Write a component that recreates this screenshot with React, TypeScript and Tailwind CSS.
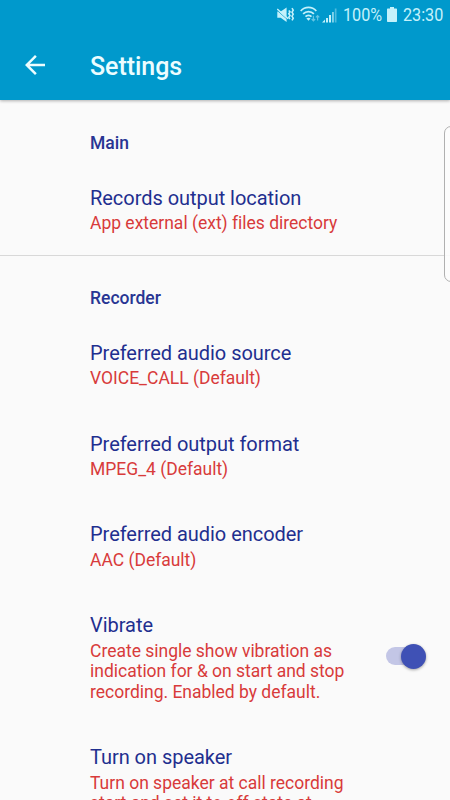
import React, { ReactNode } from "react";
import { clsx } from "clsx";

function MutedIcon() {
  return (
    <svg width="18" height="16" viewBox="0 0 18 16" fill="currentColor">
      <path d="M0.3 4.6h3.4L9.6 0.4v14.6L3.7 10.8H0.3z" />
      <path d="M0 3.3l11 9.7" stroke="#0099cc" strokeWidth="0.8" />
      <path d="M0.2 2l11 9.8" stroke="currentColor" strokeWidth="1.5" />
      <path
        d="M11.8 3.4l1.2 1.5-1.2 1.8 1.2 1.8-1.2 1.8 1.2 1.6M15 1.2l1.2 2-1.2 2 1.2 2-1.2 2 1.2 2-1.2 2.2"
        fill="none"
        stroke="currentColor"
        strokeWidth="1.6"
      />
    </svg>
  );
}

function WifiIcon() {
  return (
    <svg width="21" height="16" viewBox="0 0 21 16" fill="none" stroke="currentColor">
      <path d="M0.7 5c4.2-4.8 11.4-4.8 15.6 0" strokeWidth="1.7" />
      <path d="M3.1 7.9c2.9-3.1 7.9-3.1 10.8 0" strokeWidth="1.7" />
      <path d="M5.5 10.7c1.6-1.7 4.4-1.7 6 0" strokeWidth="1.7" />
      <path d="M8.5 14.8l-2.1-2.2c1.1-1.1 3.1-1.1 4.2 0z" fill="currentColor" stroke="none" />
      <path
        d="M13.4 9.8v4.8M11.7 13l1.7 1.8 1.7-1.8M17.6 14.4V9.8M15.9 11.4l1.7-1.8 1.7 1.8"
        strokeWidth="1.2"
        opacity=".5"
      />
    </svg>
  );
}

function SignalIcon() {
  return (
    <svg width="15" height="15" viewBox="0 0 15 15" fill="currentColor">
      <path d="M0 14.5l3-3v3z" />
      <path d="M4 10h2v4.5H4z" />
      <path d="M7 7h2v7.5H7z" />
      <path d="M10 4h1.9v10.5H10z" opacity=".65" />
      <path d="M12.8 0.5h1.7v14h-1.7z" opacity=".4" />
    </svg>
  );
}

function BatteryIcon() {
  return (
    <svg width="10" height="15" viewBox="0 0 10 15" fill="currentColor">
      <path d="M3 0h4v1.6h2.3q.7 0 .7.7v12q0 .7-.7.7H.7q-.7 0-.7-.7v-12q0-.7.7-.7H3z" />
    </svg>
  );
}

function StatusBar() {
  return (
    <div className="flex h-[30px] items-center pl-[277px] text-[#c4f1fb]">
      <MutedIcon />
      <span className="ml-[5px] flex pb-[2px]">
        <WifiIcon />
      </span>
      <span className="ml-[1px] flex">
        <SignalIcon />
      </span>
      <span className="ml-[6px] w-[44px] origin-left scale-x-[.87] text-[18.6px] leading-[30px]">
        100%
      </span>
      <span className="flex pb-[1px]">
        <BatteryIcon />
      </span>
      <span className="ml-[6px] origin-left scale-x-[.87] text-[18.6px] leading-[30px]">
        23:30
      </span>
    </div>
  );
}

function AppBar() {
  return (
    <header className="h-[100px] bg-[#0099cc] shadow-[0_1px_3px_rgba(0,0,0,0.3)]">
      <StatusBar />
      <div className="flex h-[70px] items-center pl-[20px] text-[#ecfdff]">
        <svg width="30" height="30" viewBox="0 0 24 24" fill="currentColor">
          <path d="M20 11H7.83l5.59-5.59L12 4l-8 8 8 8 1.41-1.41L7.83 13H20v-2z" />
        </svg>
        <h1 className="ml-[40px] pt-[3px] text-[25px] leading-[30px] font-medium tracking-[-0.05px]">
          Settings
        </h1>
      </div>
    </header>
  );
}

function Category({ children, className }: { children: ReactNode; className?: string }) {
  return (
    <h2
      className={clsx(
        "pl-[90px] text-[17.5px] leading-[24px] font-medium text-[#283593]",
        className,
      )}
    >
      {children}
    </h2>
  );
}

/** Small on-state switch, thumb sits over the right end of the track. */
function Switch() {
  return (
    <span className="mb-[4px] flex h-[18px] w-[36px] items-center rounded-full bg-[#c3c6e6]">
      <span className="ml-[15px] h-[25px] w-[25px] shrink-0 rounded-full bg-[#3f51b5] shadow-[0_1px_3px_rgba(0,0,0,0.35)]" />
    </span>
  );
}

type PreferenceProps = {
  title: string;
  summary: ReactNode;
  widget?: ReactNode;
};

function Preference({ title, summary, widget }: PreferenceProps) {
  return (
    <div className="flex items-center pt-[20px] pb-[19.4px] pl-[90px]">
      <div className="w-[296px] shrink-0 whitespace-nowrap">
        <div className="h-[27px] text-[20px] leading-[27px] tracking-[-0.04px] text-[#1f2f8f]">
          {title}
        </div>
        <div className="pt-[1.4px] pb-[2.4px] text-[17.5px] leading-[20.6px] tracking-[-0.01px] text-[#d83b3b]">
          {summary}
        </div>
      </div>
      {widget}
    </div>
  );
}

export default function App() {
  return (
    <div className="relative h-[800px] w-[450px] overflow-hidden bg-[#fafafa] font-['Roboto',sans-serif]">
      <AppBar />
      <Category className="pt-[31px] pb-[10px]">Main</Category>
      <Preference
        title="Records output location"
        summary="App external (ext) files directory"
      />
      <div className="-mt-px h-px bg-[#d8d8d8]" />
      <Category className="pt-[30.1px] pb-[10px]">Recorder</Category>
      <Preference title="Preferred audio source" summary="VOICE_CALL (Default)" />
      <Preference title="Preferred output format" summary="MPEG_4 (Default)" />
      <Preference title="Preferred audio encoder" summary="AAC (Default)" />
      <Preference
        title="Vibrate"
        summary={
          <>
            Create single show vibration as
            <br />
            indication for &amp; on start and stop
            <br />
            recording. Enabled by default.
          </>
        }
        widget={<Switch />}
      />
      <Preference
        title="Turn on speaker"
        summary={
          <>
            Turn on speaker at call recording
            <br />
            start and set it to off state at
          </>
        }
      />
      {/* edge panel handle */}
      <div className="absolute top-[126px] left-[444px] h-[156px] w-[14px] rounded-[8px] border border-[#b0b0b0] bg-[#fcfcfc]/90" />
    </div>
  );
}
